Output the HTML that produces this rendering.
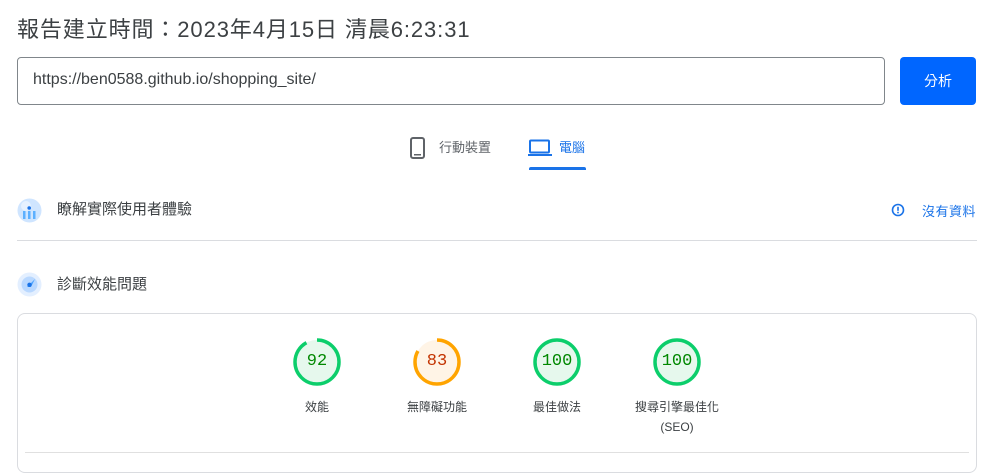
<!DOCTYPE html>
<html><head><meta charset="utf-8"><style>
*{margin:0;padding:0;box-sizing:border-box}
body{width:1002px;height:456px;overflow:hidden;background:#fff;font-family:"Liberation Sans","Noto Sans CJK TC",sans-serif;color:#202124;position:relative}
.abs{position:absolute}
.title{left:17px;top:12px;font-size:22px;color:#3c4043;white-space:nowrap;letter-spacing:0.9px}
.url{left:17px;top:57px;width:868px;height:48px;border:1px solid #80868b;border-radius:4px;font-size:16px;color:#3c4043;padding:13px 0 0 15px}
.btn{left:900px;top:57px;width:76px;height:48px;background:#0066ff;border-radius:4px;color:#fff;font-size:14px;text-align:center;line-height:48px}
.tab{font-size:13px;color:#5f6368;top:137px}
.sec{font-size:15px;color:#3c4043}
.gauge{position:absolute;top:338px;width:48px;height:48px}
.gauge span{position:absolute;left:0;top:0;width:48px;line-height:48px;text-align:center;font-family:"Liberation Mono",monospace;font-size:17px}
.lbl{position:absolute;top:397px;width:120px;text-align:center;font-size:12px;color:#3c4043;line-height:20px}
</style></head><body>
<div class="abs title">報告建立時間：2023年4月15日 清晨6:23:31</div>
<div class="abs url">https://ben0588.github.io/shopping_site/</div>
<div class="abs btn">分析</div>

<svg class="abs" style="left:409px;top:137px" width="18" height="23" viewBox="0 0 18 23"><rect x="2" y="1" width="13" height="20" rx="2" fill="none" stroke="#5f6368" stroke-width="2"/><rect x="5" y="17" width="7" height="1.5" fill="#5f6368"/></svg>
<div class="abs tab" style="left:439px">行動裝置</div>
<svg class="abs" style="left:528px;top:139px" width="24" height="18" viewBox="0 0 24 18"><rect x="2" y="1.5" width="19" height="12" rx="1" fill="none" stroke="#1a73e8" stroke-width="2"/><rect x="0" y="15" width="24" height="2" fill="#1a73e8"/></svg>
<div class="abs tab" style="left:559px;color:#1a73e8">電腦</div>
<div class="abs" style="left:529px;top:167px;width:57px;height:3px;background:#1a73e8;border-radius:2px 2px 0 0"></div>

<svg class="abs" style="left:17px;top:198px" width="25" height="25" viewBox="0 0 25 25"><circle cx="12.5" cy="12.5" r="12" fill="#cfe5ff"/><circle cx="9" cy="8" r="5" fill="#e6f1ff"/><rect x="6" y="13" width="2.5" height="8" fill="#5cb0ff"/><rect x="11" y="13" width="2.5" height="8" fill="#5cb0ff"/><rect x="16" y="13" width="2.5" height="8" fill="#5cb0ff"/><circle cx="12.2" cy="10" r="1.8" fill="#1a73e8"/></svg>
<div class="abs sec" style="left:57px;top:198px">瞭解實際使用者體驗</div>
<svg class="abs" style="left:891px;top:203px" width="14" height="14" viewBox="0 0 14 14"><circle cx="7" cy="7" r="5.5" fill="none" stroke="#1a73e8" stroke-width="1.6"/><rect x="6.2" y="3.8" width="1.6" height="4" fill="#1a73e8"/><rect x="6.2" y="8.8" width="1.6" height="1.5" fill="#1a73e8"/></svg>
<div class="abs" style="left:922px;top:201px;font-size:13px;color:#1a73e8;letter-spacing:0.5px">沒有資料</div>
<div class="abs" style="left:17px;top:240px;width:960px;height:1px;background:#dadce0"></div>

<svg class="abs" style="left:17px;top:272px" width="25" height="25" viewBox="0 0 25 25"><circle cx="12.5" cy="12.5" r="12" fill="#e3efff"/><circle cx="12.5" cy="12.5" r="8" fill="#b9d8ff"/><path d="M10 15 L18 7 L14 15 Z" fill="#4da3ff"/><circle cx="12.5" cy="12.8" r="2.2" fill="#1a73e8"/></svg>
<div class="abs sec" style="left:57px;top:273px">診斷效能問題</div>

<div class="abs" style="left:17px;top:313px;width:960px;height:160px;border:1px solid #dadce0;border-radius:8px"></div>
<div class="abs" style="left:25px;top:452px;width:944px;height:1px;background:#e0e0e0"></div>

<div class="gauge" style="left:293px"><svg width="48" height="48"><circle cx="24" cy="24" r="22" fill="#e6f8ed"/><circle cx="24" cy="24" r="22" fill="none" stroke="#0cce6b" stroke-width="3.5" stroke-dasharray="127 200" transform="rotate(-90 24 24)"/></svg><span style="color:#008800">92</span></div>
<div class="gauge" style="left:413px"><svg width="48" height="48"><circle cx="24" cy="24" r="22" fill="#fff4e6"/><circle cx="24" cy="24" r="22" fill="none" stroke="#ffa400" stroke-width="3.5" stroke-dasharray="115 200" transform="rotate(-90 24 24)"/></svg><span style="color:#c33300">83</span></div>
<div class="gauge" style="left:533px"><svg width="48" height="48"><circle cx="24" cy="24" r="22" fill="#e6f8ed" stroke="#0cce6b" stroke-width="3.5"/></svg><span style="color:#008800">100</span></div>
<div class="gauge" style="left:653px"><svg width="48" height="48"><circle cx="24" cy="24" r="22" fill="#e6f8ed" stroke="#0cce6b" stroke-width="3.5"/></svg><span style="color:#008800">100</span></div>
<div class="lbl" style="left:257px">效能</div>
<div class="lbl" style="left:377px">無障礙功能</div>
<div class="lbl" style="left:497px">最佳做法</div>
<div class="lbl" style="left:617px">搜尋引擎最佳化<br>(SEO)</div>
</body></html>
